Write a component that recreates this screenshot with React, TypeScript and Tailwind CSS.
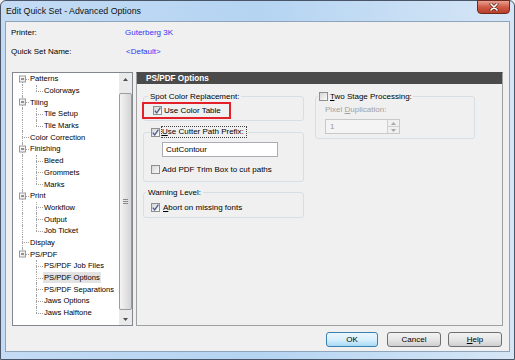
import React from 'react';

type TreeNode = {
  label: string;
  level: 0 | 1;
  expander?: boolean;
  first?: boolean;
  lastRoot?: boolean;
  last?: boolean;
  underLast?: boolean;
  selected?: boolean;
};

const treeItems: TreeNode[] = [
  { label: 'Patterns', level: 0, expander: true, first: true },
  { label: 'Colorways', level: 1, last: true },
  { label: 'Tiling', level: 0, expander: true },
  { label: 'Tile Setup', level: 1 },
  { label: 'Tile Marks', level: 1, last: true },
  { label: 'Color Correction', level: 0 },
  { label: 'Finishing', level: 0, expander: true },
  { label: 'Bleed', level: 1 },
  { label: 'Grommets', level: 1 },
  { label: 'Marks', level: 1, last: true },
  { label: 'Print', level: 0, expander: true },
  { label: 'Workflow', level: 1 },
  { label: 'Output', level: 1 },
  { label: 'Job Ticket', level: 1, last: true },
  { label: 'Display', level: 0 },
  { label: 'PS/PDF', level: 0, expander: true, lastRoot: true },
  { label: 'PS/PDF Job Files', level: 1, underLast: true },
  { label: 'PS/PDF Options', level: 1, underLast: true, selected: true },
  { label: 'PS/PDF Separations', level: 1, underLast: true },
  { label: 'Jaws Options', level: 1, underLast: true },
  { label: 'Jaws Halftone', level: 1, underLast: true, last: true },
];

const vline = 'absolute w-0 border-l border-dotted border-[#a3a3a3]';
const hline = 'absolute top-1/2 h-0 w-[7px] border-t border-dotted border-[#a3a3a3]';

function Checkbox({ checked }: { checked?: boolean }) {
  return (
    <span className="flex h-[9px] w-[9px] shrink-0 items-center justify-center border border-[#8e8f8f] bg-gradient-to-br from-[#d6d6d6] to-[#fbfbfb]">
      {checked && (
        <svg viewBox="0 0 7 7" className="h-[7px] w-[7px]">
          <path d="M0.8 3.6 L2.7 5.9 L6.4 0.6" stroke="#4a5d8f" strokeWidth="1.3" fill="none" />
        </svg>
      )}
    </span>
  );
}

function TreeRow({ item }: { item: TreeNode }) {
  return (
    <div className="relative flex h-[11.7px] items-center">
      {item.level === 0 && (
        <>
          <span
            className={
              item.first
                ? `${vline} left-[9px] top-1/2 bottom-0`
                : item.lastRoot
                  ? `${vline} left-[9px] top-0 bottom-1/2`
                  : `${vline} left-[9px] top-0 bottom-0`
            }
          />
          <span className={`${hline} left-[9px]`} />
          {item.expander && (
            <span className="absolute left-[6px] top-1/2 flex h-[7px] w-[7px] -translate-y-1/2 items-center justify-center border border-[#9a9a9a] bg-gradient-to-br from-white to-[#e4e4e4]">
              <span className="h-px w-[3px] bg-[#333]" />
            </span>
          )}
          <span className="pl-[17px]">{item.label}</span>
        </>
      )}
      {item.level === 1 && (
        <>
          {!item.underLast && <span className={`${vline} left-[9px] top-0 bottom-0`} />}
          <span className={item.last ? `${vline} left-[23px] top-0 bottom-1/2` : `${vline} left-[23px] top-0 bottom-0`} />
          <span className={`${hline} left-[23px]`} />
          <span className={item.selected ? 'ml-[30px] bg-[#e2e2e2] px-[1px]' : 'pl-[31px]'}>{item.label}</span>
        </>
      )}
    </div>
  );
}

function Arrow({ up }: { up?: boolean }) {
  return (
    <svg viewBox="0 0 5 3" className="h-[3px] w-[5px]">
      <path d={up ? 'M0 3 L2.5 0 L5 3 Z' : 'M0 0 L2.5 3 L5 0 Z'} fill="#4d4d4d" />
    </svg>
  );
}

function Scrollbar() {
  return (
    <div className="flex w-[13px] flex-col bg-[#eaeaea]">
      <div className="flex h-[12px] items-center justify-center">
        <Arrow up />
      </div>
      <div className="mt-[8px] flex h-[217px] flex-col items-center justify-center gap-[1px] rounded-[2px] border border-[#9c9c9c] bg-gradient-to-r from-[#f4f4f4] to-[#d4d4d4]">
        <span className="h-px w-[5px] bg-[#8a8a8a]" />
        <span className="h-px w-[5px] bg-[#8a8a8a]" />
        <span className="h-px w-[5px] bg-[#8a8a8a]" />
      </div>
      <div className="mt-[3px] flex h-[12px] items-center justify-center">
        <Arrow />
      </div>
    </div>
  );
}

function Button({ label, primary, width }: { label: React.ReactNode; primary?: boolean; width: string }) {
  return (
    <div
      className={
        primary
          ? `${width} flex h-[15px] items-center justify-center rounded-[3px] border border-[#3c7fb1] bg-gradient-to-b from-[#eaf6fd] via-[#d9f0fc] to-[#a7d9f5]`
          : `${width} flex h-[15px] items-center justify-center rounded-[3px] border border-[#707070] bg-gradient-to-b from-[#f2f2f2] via-[#e6e6e6] to-[#cfcfcf]`
      }
    >
      {label}
    </div>
  );
}

export default function App() {
  return (
    <div className="h-[360px] w-[515px] overflow-hidden bg-[#f0f0f0]">
      <div className="flex h-[360px] w-[515px] flex-col rounded-t-[6px] border border-[#4a5668] bg-gradient-to-r from-[#c4dbf4] via-[#b4d4f2] to-[#d6e6f6] font-['Liberation_Sans',Arial,sans-serif] text-[8px] leading-[11px] text-black">
        {/* Title bar */}
        <div className="flex h-[20px] items-start justify-between">
          <span className="pl-[5px] pt-[4px] text-[8.8px] leading-[12px] text-[#111]">Edit Quick Set - Advanced Options</span>
          <div className="mr-[4px] -mt-px flex h-[14px] w-[33px] items-center justify-center rounded-b-[4px] border border-[#6e2a1f] bg-gradient-to-b from-[#e8a093] via-[#cf5a45] to-[#b8402b]">
            <svg viewBox="0 0 10 8" className="h-[8px] w-[10px]">
              <path d="M2 1 L8 7 M8 1 L2 7" stroke="#5a1c12" strokeWidth="3" strokeLinecap="round" />
              <path d="M2 1 L8 7 M8 1 L2 7" stroke="#ffffff" strokeWidth="1.7" strokeLinecap="round" />
            </svg>
          </div>
        </div>

        {/* Client area */}
        <div className="ml-[4px] flex w-[505px] flex-col border border-[#8fa3bb] bg-[#f0f0f0] px-[5px] pb-[4px] pt-[5px]">
          <div className="flex h-[11px] items-center">
            <span className="w-[114px]">Printer:</span>
            <span className="text-[#3535f2]">Guterberg 3K</span>
          </div>
          <div className="mt-[8px] flex h-[11px] items-center">
            <span className="w-[114px]">Quick Set Name:</span>
            <span className="pl-px text-[#3535f2]">&lt;Default&gt;</span>
          </div>

          <div className="mt-[15px] flex h-[254px] pl-px">
            {/* Tree */}
            <div className="flex w-[121px] border border-[#828790] bg-white text-[7.6px]">
              <div className="flex-1">
                {treeItems.map((item) => (
                  <TreeRow key={item.label} item={item} />
                ))}
              </div>
              <Scrollbar />
            </div>

            {/* Options panel */}
            <div className="ml-[3px] flex w-[367px] flex-col border border-[#a0a0a0] border-t-[#4b4b4b]">
              <div className="flex h-[11px] items-center bg-[#4b4b4b] pl-[9px] text-[8.2px] font-bold text-white">PS/PDF Options</div>
              <div className="flex gap-[11px] pl-[6px] pt-[7px]">
                <div className="flex w-[161px] flex-col">
                  <fieldset className="rounded-[3px] border border-[#d5dfe5] pb-px">
                    <legend className="ml-[4px] px-[2px] leading-[11px]">Spot Color Replacement:</legend>
                    <div className="-ml-[2px] flex h-[17px] w-[89px] items-center gap-[2px] border-2 border-[#e3212b] pl-[9px]">
                      <Checkbox checked />
                      <span>Use Color Table</span>
                    </div>
                  </fieldset>

                  <fieldset className="mt-[5px] rounded-[3px] border border-[#d5dfe5] pb-[6px]">
                    <legend className="ml-[6px] flex h-[12px] items-center gap-px px-px">
                      <Checkbox checked />
                      <span className="border border-dotted border-[#444] pr-[2px] leading-[10px]">
                        <span className="underline">U</span>se Cutter Path Prefix:
                      </span>
                    </legend>
                    <div className="ml-[18px] mt-[4px] flex h-[15px] w-[116px] items-center border border-[#abadb3] bg-white pl-[3px]">
                      CutContour
                    </div>
                    <div className="ml-[7px] mt-[7px] flex h-[11px] items-center gap-[2px]">
                      <Checkbox />
                      <span>Add PDF Trim Box to cut paths</span>
                    </div>
                  </fieldset>

                  <fieldset className="mt-[5px] rounded-[3px] border border-[#d5dfe5] pb-[4px]">
                    <legend className="ml-[2px] px-[2px] leading-[11px]">Warning Level:</legend>
                    <div className="ml-[7px] mt-[4px] flex h-[11px] items-center gap-[3px]">
                      <Checkbox checked />
                      <span>
                        <span className="underline">A</span>bort on missing fonts
                      </span>
                    </div>
                  </fieldset>
                </div>

                <div className="w-[160px]">
                  <fieldset className="rounded-[3px] border border-[#d5dfe5] pb-[4px]">
                    <legend className="ml-[2px] flex h-[11px] items-center gap-[2px] px-px">
                      <Checkbox />
                      <span>
                        <span className="underline">T</span>wo Stage Processing:
                      </span>
                    </legend>
                    <div className="ml-[9px] mt-[2px] h-[11px] text-[#a0a0a0]">
                      Pixel <span className="underline">D</span>uplication:
                    </div>
                    <div className="ml-[9px] mt-[4px] flex h-[15px] w-[75px] border border-[#c5c9cc] bg-[#f4f4f4]">
                      <span className="flex-1 pl-[4px] leading-[13px] text-[#9a9a9a]">1</span>
                      <div className="flex w-[12px] flex-col border-l border-[#d0d0d0]">
                        <div className="flex flex-1 items-center justify-center border-b border-[#d0d0d0] bg-[#f0f0f0]">
                          <svg viewBox="0 0 5 3" className="h-[3px] w-[5px]"><path d="M0 3 L2.5 0 L5 3 Z" fill="#a8a8a8" /></svg>
                        </div>
                        <div className="flex flex-1 items-center justify-center bg-[#f0f0f0]">
                          <svg viewBox="0 0 5 3" className="h-[3px] w-[5px]"><path d="M0 0 L2.5 3 L5 0 Z" fill="#a8a8a8" /></svg>
                        </div>
                      </div>
                    </div>
                  </fieldset>
                </div>
              </div>
            </div>
          </div>

          {/* Buttons */}
          <div className="mt-[6px] flex justify-end pr-[2px]">
            <Button label="OK" primary width="w-[52px]" />
            <div className="ml-[9px]">
              <Button label="Cancel" width="w-[54px]" />
            </div>
            <div className="ml-[7px]">
              <Button label={<span><span className="underline">H</span>elp</span>} width="w-[54px]" />
            </div>
          </div>
        </div>
      </div>
    </div>
  );
}
